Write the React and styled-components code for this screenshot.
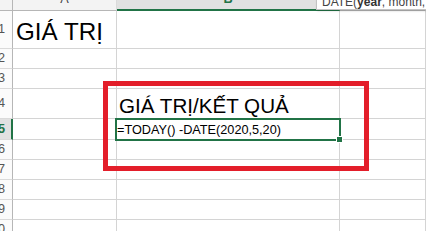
import styled, { createGlobalStyle } from 'styled-components';

const GRID = '#d4d4d4';
const HEAD_LINE = '#b6b6b6';
const EXCEL_GREEN = '#217346';
const MARK_RED = '#e31e2a';

const GlobalStyle = createGlobalStyle`
  html, body {
    margin: 0;
    padding: 0;
    background: #ffffff;
    overflow: hidden;
  }
  body {
    font-family: "Liberation Sans", Arial, sans-serif;
  }
`;

const columns = ['A', 'B', 'C'];
const rowHeights = [38, 20, 20, 30, 21, 20, 20, 20, 20, 20];

const contents = {
  A1: { text: 'GIÁ TRỊ', size: 24.2, pl: 3, pb: 4 },
  B4: { text: 'GIÁ TRỊ/KẾT QUẢ', size: 20.6, pl: 2, pb: 1 },
  B5: { text: '=TODAY() -DATE(2020,5,20)', size: 12.7, pl: 0, pb: 2 },
};

const App = () => {
  return (
    <>
      <GlobalStyle />
      <Sheet>
        <Corner />
        {columns.map((col) => (
          <ColHeader key={col} $selected={col === 'B'}>
            {col}
          </ColHeader>
        ))}

        {rowHeights.map((h, i) => {
          const row = i + 1;
          return [
            <RowHeader key={`h${row}`} $selected={row === 5}>
              {row}
            </RowHeader>,
            ...columns.map((col) => {
              const c = contents[`${col}${row}`];
              return (
                <Cell key={`${col}${row}`} $pl={c?.pl} $pb={c?.pb}>
                  {c && <CellText $size={c.size}>{c.text}</CellText>}
                </Cell>
              );
            }),
          ];
        })}

        <Tooltip>
          <TipText>
            DATE(<b>year</b>, month, day)
          </TipText>
        </Tooltip>

        <Selection>
          <FillHandle />
        </Selection>

        <Highlight />
      </Sheet>
    </>
  );
};

const Sheet = styled.div`
  position: relative;
  width: 426px;
  height: 231px;
  overflow: hidden;
  display: grid;
  grid-template-columns: 13px 104px 223px 1fr;
  grid-template-rows: 11px ${rowHeights.map((h) => `${h}px`).join(' ')};
  background: #ffffff;
`;

const Corner = styled.div`
  box-sizing: border-box;
  background: #f3f3f3;
  border-right: 1px solid ${HEAD_LINE};
  border-bottom: 1px solid ${HEAD_LINE};
`;

const ColHeader = styled.div`
  box-sizing: border-box;
  display: flex;
  justify-content: center;
  align-items: flex-end;
  padding-bottom: ${(p) => (p.$selected ? 3 : 4)}px;
  overflow: hidden;
  background: ${(p) => (p.$selected ? '#e1e1e1' : '#f3f3f3')};
  border-right: 1px solid ${(p) => (p.$selected ? '#c6c6c6' : '#dadada')};
  border-bottom: ${(p) =>
    p.$selected ? `2px solid ${EXCEL_GREEN}` : `1px solid ${HEAD_LINE}`};
  color: ${(p) => (p.$selected ? EXCEL_GREEN : '#444444')};
  font-weight: ${(p) => (p.$selected ? 700 : 400)};
  font-size: 12.7px;
  line-height: 1;
`;

const RowHeader = styled.div`
  box-sizing: border-box;
  display: flex;
  justify-content: flex-end;
  align-items: center;
  padding-right: ${(p) => (p.$selected ? 6 : 7)}px;
  overflow: hidden;
  background: ${(p) => (p.$selected ? '#e1e1e1' : '#fbfbfb')};
  border-right: ${(p) =>
    p.$selected ? `2px solid ${EXCEL_GREEN}` : `1px solid ${HEAD_LINE}`};
  border-bottom: 1px solid #dadada;
  color: ${(p) => (p.$selected ? EXCEL_GREEN : '#555555')};
  font-weight: ${(p) => (p.$selected ? 700 : 400)};
  font-size: 12.7px;
  line-height: 1;
`;

const Cell = styled.div`
  box-sizing: border-box;
  display: flex;
  align-items: flex-end;
  min-width: 0;
  padding-left: ${(p) => p.$pl ?? 2}px;
  padding-bottom: ${(p) => p.$pb ?? 2}px;
  border-right: 1px solid ${GRID};
  border-bottom: 1px solid ${GRID};
`;

const CellText = styled.span`
  font-size: ${(p) => p.$size}px;
  line-height: 1;
  color: #000000;
  white-space: nowrap;
`;

const Tooltip = styled.div`
  position: absolute;
  left: 316px;
  top: -12px;
  width: 130px;
  height: 22px;
  box-sizing: border-box;
  display: flex;
  align-items: flex-end;
  padding: 0 0 1px 5px;
  background: #ffffff;
  border: 1px solid #c3c3c3;
  box-shadow: 1px 1px 2px rgba(0, 0, 0, 0.18);
`;

const TipText = styled.span`
  font-size: 12px;
  line-height: 1;
  color: #444444;
  white-space: nowrap;

  b {
    color: #333333;
  }
`;

const Selection = styled.div`
  position: absolute;
  left: 115px;
  top: 118px;
  width: 226px;
  height: 23px;
  box-sizing: border-box;
  border: 2px solid ${EXCEL_GREEN};
`;

const FillHandle = styled.div`
  position: absolute;
  right: -4px;
  bottom: -4px;
  width: 5px;
  height: 5px;
  background: ${EXCEL_GREEN};
  border: 1px solid #ffffff;
`;

const Highlight = styled.div`
  position: absolute;
  left: 103px;
  top: 81px;
  width: 266px;
  height: 90px;
  box-sizing: border-box;
  border: 5px solid ${MARK_RED};
  pointer-events: none;
`;

export default App;
